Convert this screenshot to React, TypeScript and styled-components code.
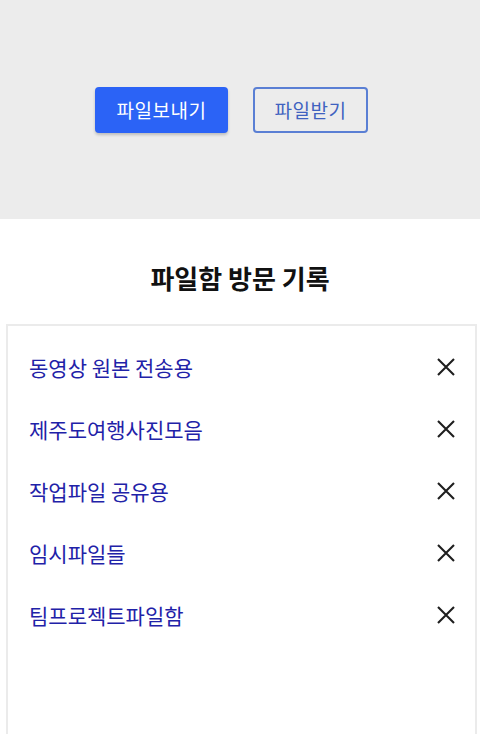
import React from 'react';
import styled, { createGlobalStyle } from 'styled-components';

const GlobalStyle = createGlobalStyle`
  html, body {
    margin: 0;
    padding: 0;
    background: #ffffff;
    font-family: "Noto Sans CJK KR", "Noto Sans", sans-serif;
  }
`;

const Page = styled.div`
  width: 480px;
  height: 734px;
  overflow: hidden;
  display: flex;
  flex-direction: column;
`;

const Toolbar = styled.div`
  height: 219px;
  background: #ececec;
  display: flex;
  align-items: center;
  justify-content: center;
  gap: 25px;
  padding-right: 17px;
`;

const SendButton = styled.button`
  width: 133px;
  height: 46px;
  border: none;
  border-radius: 4px;
  background: #2b63f6;
  color: #ffffff;
  font-family: inherit;
  font-size: 19px;
  letter-spacing: 0.5px;
  box-shadow: 0 2px 3px rgba(0, 0, 0, 0.2);
  cursor: pointer;
`;

const ReceiveButton = styled.button`
  width: 115px;
  height: 46px;
  border: 2px solid #5a7fd4;
  border-radius: 4px;
  background: transparent;
  color: #3f62c0;
  font-family: inherit;
  font-size: 19px;
  letter-spacing: 0.5px;
  cursor: pointer;
`;

const Title = styled.h2`
  margin: 42px 0 0;
  height: 34px;
  line-height: 34px;
  text-align: center;
  font-size: 26px;
  font-weight: 700;
  color: #111111;
`;

const Card = styled.div`
  margin: 29px 3px 0 6px;
  flex: 1;
  border: 2px solid #ebebeb;
  border-bottom: none;
  padding-top: 10px;
`;

const Row = styled.div`
  height: 62px;
  display: flex;
  align-items: center;
  justify-content: space-between;
  padding: 0 17px 0 21px;
`;

const Name = styled.span`
  font-size: 21px;
  color: #1f22a8;
`;

const Remove = styled.button`
  width: 24px;
  height: 24px;
  padding: 0;
  border: none;
  background: none;
  display: flex;
  align-items: center;
  justify-content: center;
  cursor: pointer;
`;

const items = ['동영상 원본 전송용', '제주도여행사진모음', '작업파일 공유용', '임시파일들', '팀프로젝트파일함'];

const CloseIcon = () => (
  <svg width="20" height="20" viewBox="0 0 20 20">
    <path d="M2 2 L18 18 M18 2 L2 18" stroke="#1e1e1e" strokeWidth="2.1" fill="none" />
  </svg>
);

export default function App() {
  return (
    <Page>
      <GlobalStyle />
      <Toolbar>
        <SendButton>파일보내기</SendButton>
        <ReceiveButton>파일받기</ReceiveButton>
      </Toolbar>
      <Title>파일함 방문 기록</Title>
      <Card>
        {items.map((name) => (
          <Row key={name}>
            <Name>{name}</Name>
            <Remove aria-label="삭제">
              <CloseIcon />
            </Remove>
          </Row>
        ))}
      </Card>
    </Page>
  );
}
